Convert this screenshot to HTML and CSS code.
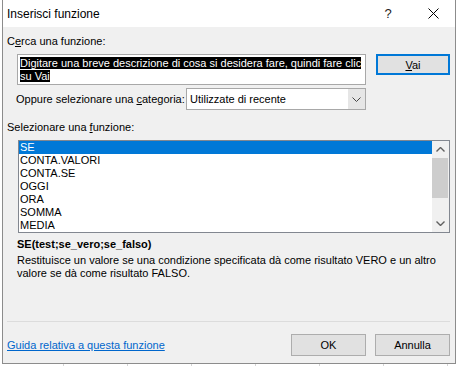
FILE: index.html
```html
<!DOCTYPE html>
<html>
<head>
    <title>Inserisci funzione</title>
    <link rel="stylesheet" href="styles.css">
</head>
<body>
    <div class="dialog">
        <div class="titlebar">
            <span class="title">Inserisci funzione</span>
            <span class="help">?</span>
            <span class="close">
                <svg width="11" height="11" viewBox="0 0 11 11"><path d="M0.5 0.5 L10.5 10.5 M10.5 0.5 L0.5 10.5" stroke="#000" stroke-width="1" fill="none"/></svg>
            </span>
        </div>

        <div class="content">
            <div class="label">C<u>e</u>rca una funzione:</div>

            <div class="search-row">
                <div class="search-box">
                    <span class="sel">Digitare una breve descrizione di cosa si desidera fare, quindi fare clic su Vai</span>
                </div>
                <button class="btn btn-default"><u>V</u>ai</button>
            </div>

            <div class="category-row">
                <span class="category-label">Oppure selezionare una <u>c</u>ategoria:</span>
                <div class="select">
                    <span class="select-text">Utilizzate di recente</span>
                    <span class="select-arrow">
                        <svg width="9" height="5" viewBox="0 0 9 5"><path d="M0.5 0.5 L4.5 4.5 L8.5 0.5" stroke="#444" stroke-width="1" fill="none"/></svg>
                    </span>
                </div>
            </div>

            <div class="label list-label">Selezionare una <u>f</u>unzione:</div>

            <div class="listbox">
                <ul class="items">
                    <li class="selected">SE</li>
                    <li>CONTA.VALORI</li>
                    <li>CONTA.SE</li>
                    <li>OGGI</li>
                    <li>ORA</li>
                    <li>SOMMA</li>
                    <li>MEDIA</li>
                </ul>
                <div class="scrollbar">
                    <span class="sb-arrow">
                        <svg width="9" height="5" viewBox="0 0 9 5"><path d="M0.5 4.5 L4.5 0.5 L8.5 4.5" stroke="#606060" stroke-width="1.4" fill="none"/></svg>
                    </span>
                    <span class="sb-track"><span class="sb-thumb"></span></span>
                    <span class="sb-arrow">
                        <svg width="9" height="5" viewBox="0 0 9 5"><path d="M0.5 0.5 L4.5 4.5 L8.5 0.5" stroke="#606060" stroke-width="1.4" fill="none"/></svg>
                    </span>
                </div>
            </div>

            <div class="signature">SE(test;se_vero;se_falso)</div>
            <p class="desc">Restituisce un valore se una condizione specificata dà come risultato VERO e un altro valore se dà come risultato FALSO.</p>
        </div>

        <div class="footer">
            <a class="help-link" href="#">Guida relativa a questa funzione</a>
            <div class="actions">
                <button class="btn">OK</button>
                <button class="btn">Annulla</button>
            </div>
        </div>
    </div>
</body>
</html>
```

FILE: styles.css
```css
body {
    margin: 0;
    font-family: 'Liberation Sans', Arial, sans-serif;
    font-size: 11px;
    color: #000;
    background: #fff repeating-linear-gradient(90deg, transparent 0, transparent 63px, #d4d4d4 63px, #d4d4d4 64px);
}
.dialog {
    margin-left: 2px;
    width: 454px;
    height: 364px;
    box-sizing: border-box;
    border: 1px solid #8c8c8c;
    border-top: 0;
    background: #f0f0f0;
    display: flex;
    flex-direction: column;
}
.titlebar {
    height: 27px;
    background: #fff;
    display: flex;
    align-items: center;
    flex-shrink: 0;
}
.title {
    flex: 1;
    padding-left: 4px;
    font-size: 12px;
}
.help {
    width: 30px;
    text-align: center;
    font-size: 13px;
    color: #222;
    margin-right: 8px;
}
.close {
    width: 44px;
    height: 27px;
    display: flex;
    align-items: center;
    justify-content: center;
}
.content {
    flex: 1;
    padding: 7px 5px 0 4px;
}
.label {
    line-height: 15px;
}
.search-row {
    display: flex;
    justify-content: space-between;
    align-items: flex-start;
    margin: 5px 0 0 10px;
}
.search-box {
    width: 349px;
    height: 31px;
    box-sizing: border-box;
    border: 1px solid #a8a8a8;
    background: #fff;
    padding: 2px 2px;
    line-height: 13px;
}
.sel {
    background: #000;
    color: #fff;
}
.btn {
    width: 75px;
    height: 22px;
    box-sizing: border-box;
    border: 1px solid #adadad;
    background: #e1e1e1;
    font-family: inherit;
    font-size: 11px;
    color: #000;
    padding: 0;
}
.btn-default {
    width: 74px;
    height: 21px;
    border: 2px solid #0078d7;
}
.category-row {
    display: flex;
    align-items: center;
    margin: 3px 0 0 9px;
}
.category-label {
    width: 170px;
}
.select {
    width: 180px;
    height: 22px;
    box-sizing: border-box;
    border: 1px solid #a8a8a8;
    background: #fff;
    display: flex;
}
.select-text {
    flex: 1;
    padding-left: 3px;
    line-height: 20px;
}
.select-arrow {
    width: 17px;
    background: #e6e6e6;
    display: flex;
    align-items: center;
    justify-content: center;
}
.list-label {
    margin-top: 10px;
}
.listbox {
    margin: 5px 0 0 11px;
    height: 93px;
    box-sizing: border-box;
    border: 1px solid #828790;
    background: #fff;
    display: flex;
}
.items {
    list-style: none;
    margin: 0;
    padding: 0;
    flex: 1;
}
.items li {
    height: 13px;
    line-height: 13px;
    padding-left: 1px;
}
.items li.selected {
    background: #0078d7;
    color: #fff;
}
.scrollbar {
    width: 17px;
    background: #f0f0f0;
    display: flex;
    flex-direction: column;
}
.sb-arrow {
    height: 17px;
    display: flex;
    align-items: center;
    justify-content: center;
}
.sb-track {
    flex: 1;
}
.sb-thumb {
    display: block;
    height: 40px;
    margin: 0 1px 0 0;
    background: #cdcdcd;
}
.signature {
    margin: 4px 0 0 10px;
    line-height: 15px;
    font-weight: bold;
}
.desc {
    margin: 2px 0 0 10px;
    line-height: 13px;
}
.footer {
    margin: 0 5px 0 4px;
    padding: 12px 0 7px;
    border-top: 1px solid #dcdcdc;
    display: flex;
    align-items: center;
}
.help-link {
    flex: 1;
    color: #0066cc;
}
.actions {
    display: flex;
    gap: 9px;
}
```
